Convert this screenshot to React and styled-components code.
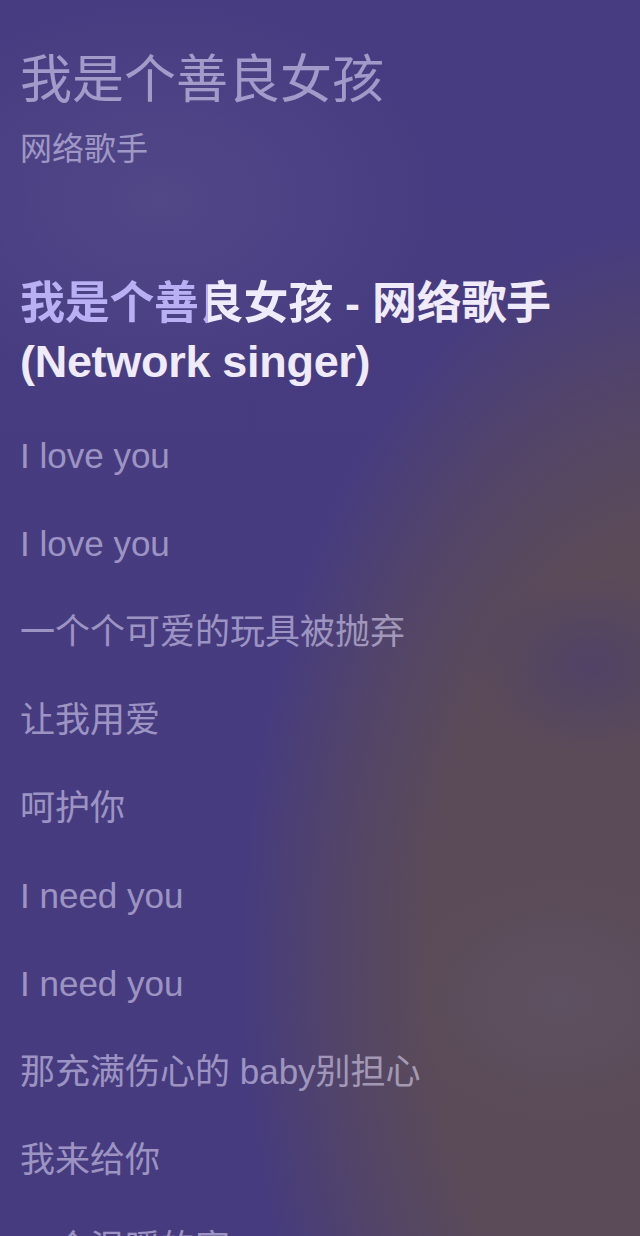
import React from "react";
import styled, { createGlobalStyle } from "styled-components";

const Global = createGlobalStyle`
  html, body {
    margin: 0;
    padding: 0;
    height: 1236px;
    overflow: hidden;
    background: #463b7e;
  }
  #root { height: 1236px; }
`;

const Screen = styled.main`
  box-sizing: border-box;
  width: 640px;
  height: 1236px;
  overflow: hidden;
  padding: 50px 20px 0 20px;
  font-family: "Liberation Sans", "Noto Sans CJK SC", sans-serif;
  background:
    radial-gradient(ellipse 120px 90px at 590px 665px, rgba(76, 62, 108, 0.7) 0%, rgba(76, 62, 108, 0) 100%),
    radial-gradient(ellipse 160px 120px at 560px 1000px, rgba(98, 88, 108, 0.45) 0%, rgba(98, 88, 108, 0) 100%),
    radial-gradient(ellipse 280px 200px at 160px 200px, rgba(94, 86, 144, 0.45) 0%, rgba(94, 86, 144, 0) 100%),
    radial-gradient(ellipse 500px 840px at 680px 960px, #5b4b58 0%, #5b4b58 50%, rgba(91, 75, 88, 0.6) 68%, rgba(91, 75, 88, 0) 88%),
    linear-gradient(180deg, #473c81 0%, #463b7e 100%);
  display: flex;
  flex-direction: column;
`;

const Header = styled.header`
  display: flex;
  flex-direction: column;
  gap: 19px;
`;

const Title = styled.h1`
  margin: 0;
  font-size: 52px;
  line-height: 60px;
  font-weight: 400;
  color: rgba(232, 226, 255, 0.56);
`;

const Artist = styled.div`
  font-size: 32px;
  line-height: 40px;
  color: rgba(232, 226, 255, 0.55);
`;

const Lyrics = styled.section`
  margin-top: 106px;
  display: flex;
  flex-direction: column;
  gap: 44px;
`;

const Current = styled.div`
  font-size: 45px;
  line-height: 58px;
  font-weight: 700;
  letter-spacing: -0.3px;
  color: #efebfa;
  margin-bottom: -1px;
`;

const Sung = styled.span`
  background: linear-gradient(90deg, #b8aff5 0, #b8aff5 ${(p) => p.$progress}px, #efebfa ${(p) => p.$progress}px);
  -webkit-background-clip: text;
  background-clip: text;
  color: transparent;
`;

const Line = styled.div`
  font-size: 35px;
  line-height: 44px;
  color: rgba(232, 226, 255, 0.55);
  white-space: nowrap;
`;

const lines = [
  "I love you",
  "I love you",
  "一个个可爱的玩具被抛弃",
  "让我用爱",
  "呵护你",
  "I need you",
  "I need you",
  "那充满伤心的 baby别担心",
  "我来给你",
  "一个温暖的家",
  "I love you",
];

export default function App() {
  return (
    <>
      <Global />
      <Screen>
        <Header>
          <Title>我是个善良女孩</Title>
          <Artist>网络歌手</Artist>
        </Header>
        <Lyrics>
          <Current>
            <Sung $progress={188}>我是个善良女孩</Sung> - 网络歌手 (Network singer)
          </Current>
          {lines.map((l, i) => (
            <Line key={i}>{l}</Line>
          ))}
        </Lyrics>
      </Screen>
    </>
  );
}
